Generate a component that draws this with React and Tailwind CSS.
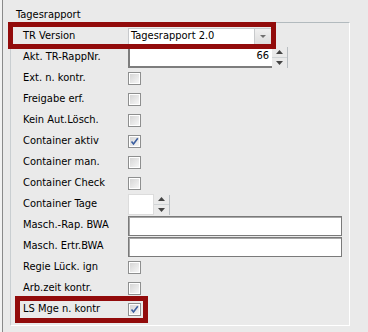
import React from "react";

const font = { fontFamily: '"DejaVu Sans Condensed", "DejaVu Sans", sans-serif', fontStretch: "condensed" };

function Check({ checked }) {
  return (
    <div className="w-[13px] h-[13px] border border-[#8e8f8f] bg-white p-px">
      <div className="w-full h-full bg-gradient-to-br from-[#d6d6d6] to-[#f6f6f6] flex items-center justify-center">
        {checked && (
          <svg width="9" height="9" viewBox="0 0 9 9">
            <path d="M1.5 4.5 L3.5 7 L7.8 1.2" fill="none" stroke="#3b5ea0" strokeWidth="1.6" />
          </svg>
        )}
      </div>
    </div>
  );
}

function Spinner({ h }) {
  return (
    <div className={`w-[16px] ${h} flex flex-col border-r border-[#b9bec2]`}>
      <div className="flex-1 flex items-center justify-center border-b border-[#d0d4d6]">
        <svg width="7" height="4" viewBox="0 0 7 4"><path d="M0 4 L3.5 0 L7 4 Z" fill="#444" /></svg>
      </div>
      <div className="flex-1 flex items-center justify-center">
        <svg width="7" height="4" viewBox="0 0 7 4"><path d="M0 0 L3.5 4 L7 0 Z" fill="#444" /></svg>
      </div>
    </div>
  );
}

function Row({ label, children }) {
  return (
    <div className="flex items-center h-[21px]">
      <div className="w-[105px] text-[11px] text-black whitespace-nowrap">{label}</div>
      {children}
    </div>
  );
}

export default function App() {
  const checks = [
    ["Ext. n. kontr.", false],
    ["Freigabe erf.", false],
    ["Kein Aut.Lösch.", false],
    ["Container aktiv", true],
    ["Container man.", false],
    ["Container Check", false],
  ];
  return (
    <div className="relative w-[368px] h-[332px] overflow-hidden bg-[#eaeaea] flex" style={font}>
      <div className="w-[2px] h-full bg-[#f2f2f2]" />
      <div className="w-px h-full bg-[#8a8a8a]" />
      <div className="pl-[7px] pt-[22px]">
        <div className="relative w-[340px] h-[304px] border border-t-[#b2babe] border-l-[#c9ced1] border-r-white border-b-white pt-[3px] pl-[12px]">
          <div className="absolute left-[4px] top-[-15px] px-px bg-[#eaeaea] text-[11px] leading-[14px] text-black">
            Tagesrapport
          </div>
          <Row label="TR Version">
            <div className="w-[144px] h-[18px] bg-white flex items-center border border-[#c7c9cc]">
              <div className="flex-1 pl-[2px] text-[11px] text-black">Tagesrapport 2.0</div>
              <div className="w-[17px] h-full bg-gradient-to-b from-[#f0f0f0] to-[#dcdcdc] border-l border-[#c8cacc] flex items-center justify-center">
                <svg width="6" height="3" viewBox="0 0 6 3"><path d="M0 0 L3 3 L6 0 Z" fill="#707070" /></svg>
              </div>
            </div>
          </Row>
          <Row label="Akt. TR-RappNr.">
            <div className="w-[144px] h-[21px] bg-white border-l-2 border-b-2 border-[#7d7d7d] flex items-center justify-end pr-[3px] text-[11px] text-black">
              66
            </div>
            <Spinner h="h-[21px]" />
          </Row>
          {checks.map(([l, c]) => (
            <Row key={l} label={l}>
              <Check checked={c} />
            </Row>
          ))}
          <Row label="Container Tage">
            <div className="w-[26px] h-[21px] bg-white border border-[#dcdcdc]" />
            <Spinner h="h-[20px]" />
          </Row>
          <Row label="Masch.-Rap. BWA">
            <div className="w-[214px] h-[20px] bg-white border border-[#7a7a7a] shadow-[inset_1px_1px_0_#a8a8a8]" />
          </Row>
          <Row label="Masch. Ertr.BWA">
            <div className="w-[214px] h-[20px] bg-white border border-[#7a7a7a] shadow-[inset_1px_1px_0_#a8a8a8]" />
          </Row>
          <Row label="Regie Lück. ign">
            <Check checked={false} />
          </Row>
          <Row label="Arb.zeit kontr.">
            <Check checked={false} />
          </Row>
          <Row label="LS Mge n. kontr">
            <Check checked={true} />
          </Row>
        </div>
      </div>
      <div className="absolute left-[8px] top-[22px] w-[268px] h-[27px] border-[5px] border-[#920b0b]" />
      <div className="absolute left-[15px] top-[296px] w-[133px] h-[27px] border-[5px] border-[#920b0b]" />
    </div>
  );
}
